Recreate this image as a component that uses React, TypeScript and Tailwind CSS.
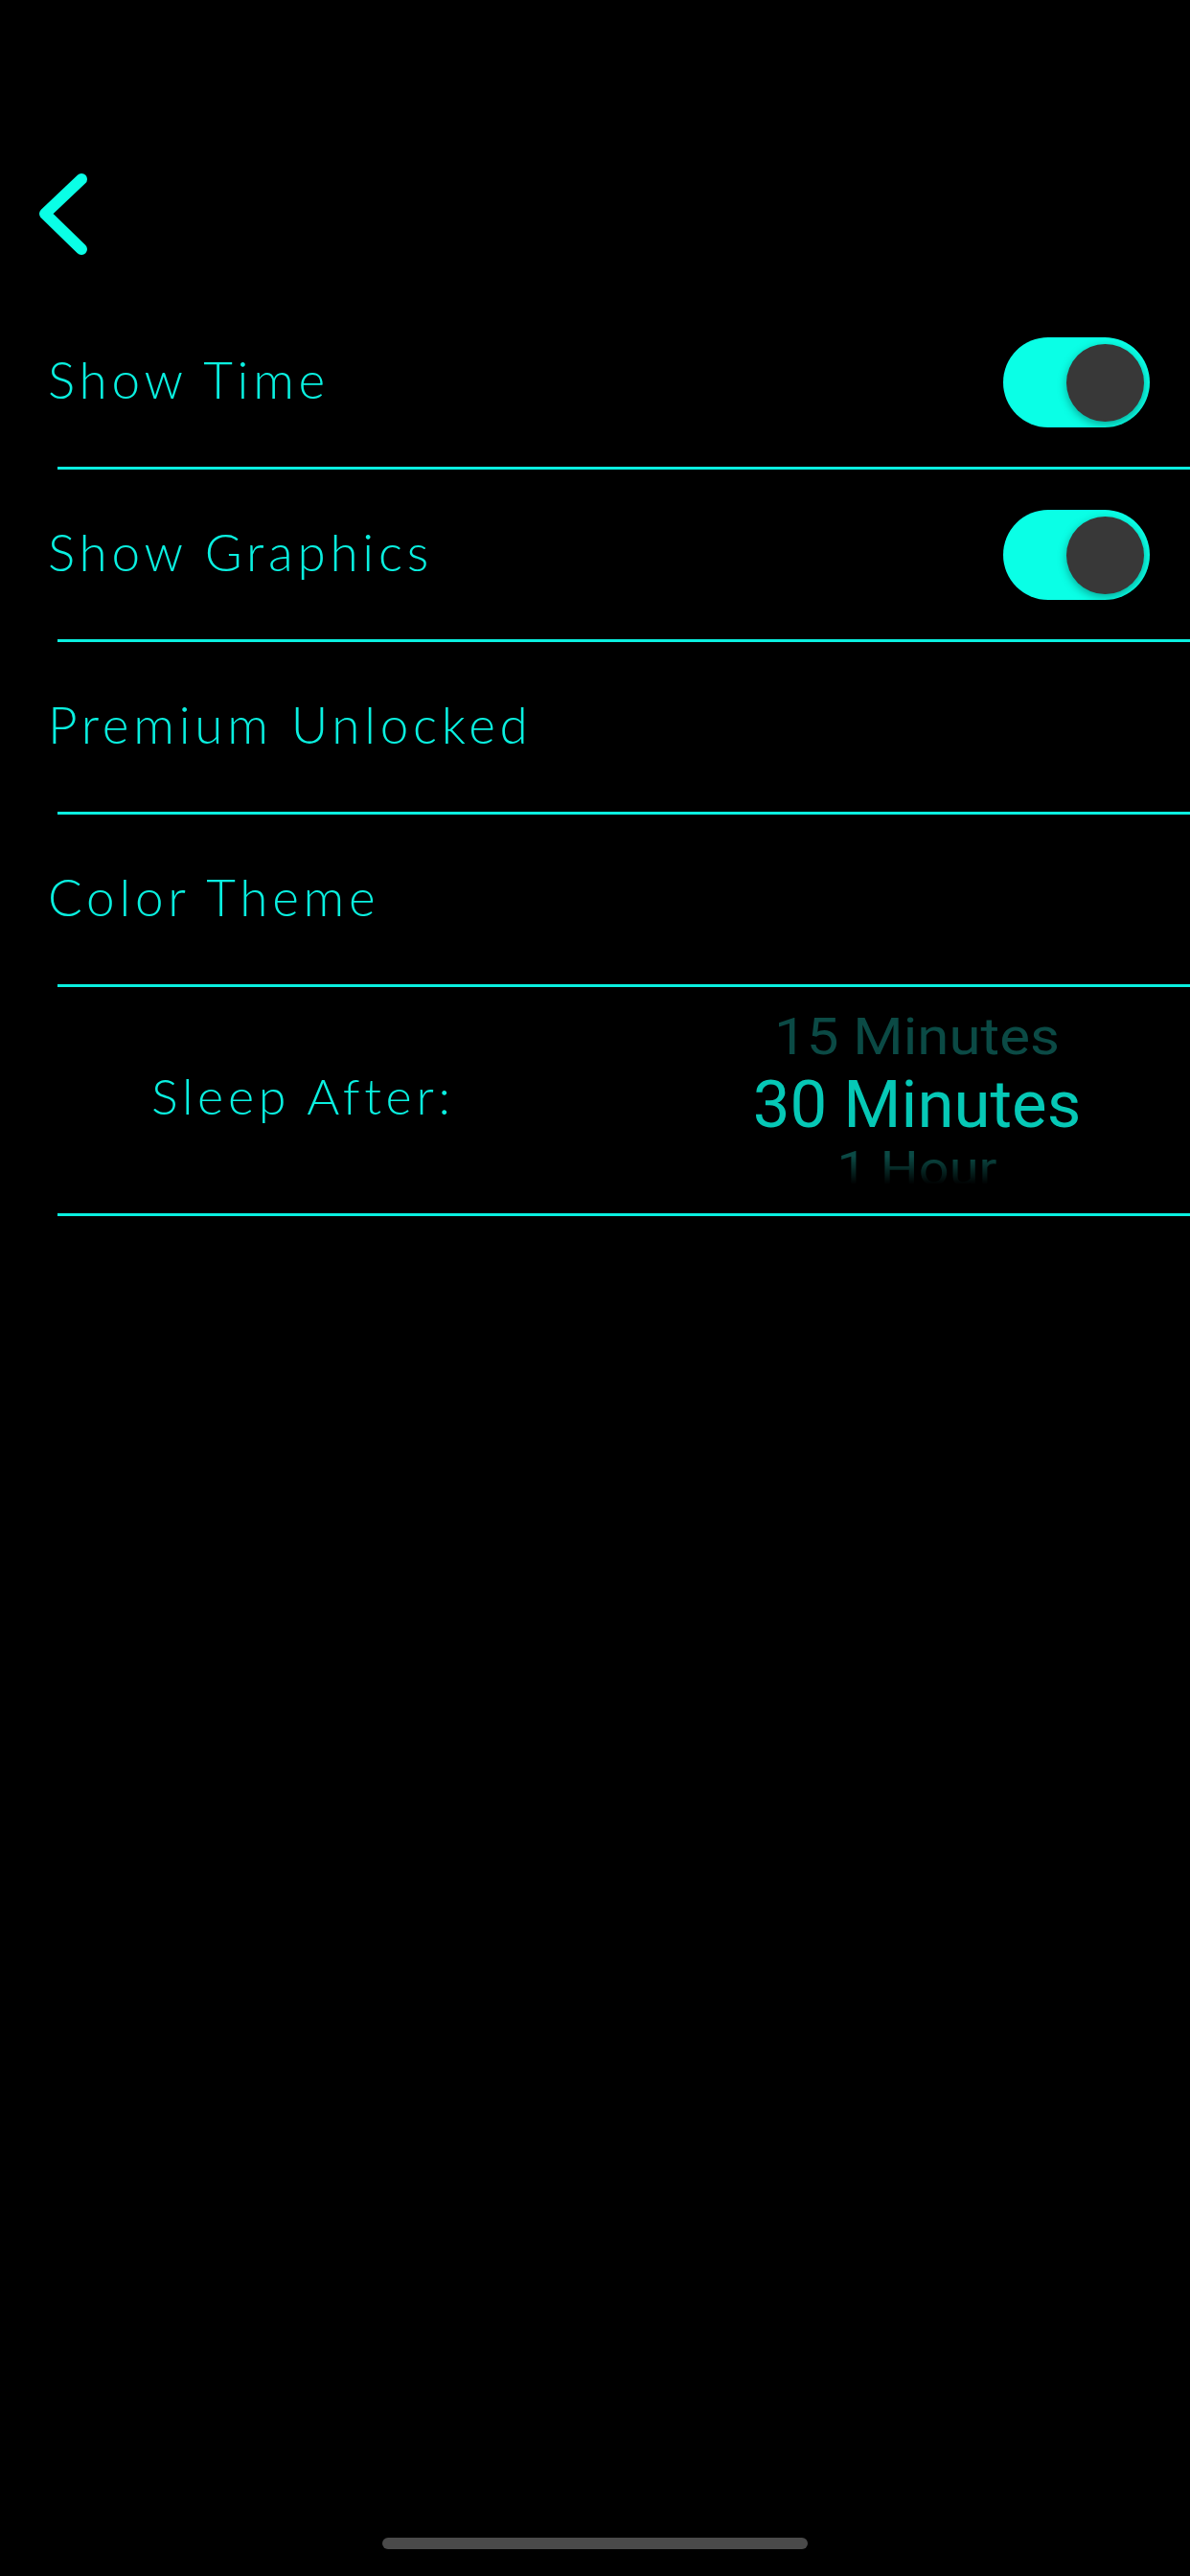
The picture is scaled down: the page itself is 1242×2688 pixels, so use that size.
import { useState } from "react";

const labelFont = { fontFamily: "Lato, 'Open Sans', sans-serif" };

const Toggle = ({ on, onChange }: { on: boolean; onChange: () => void }) => (
  <button
    onClick={onChange}
    className={`relative w-[153px] h-[94px] rounded-full ${on ? "bg-[#0affe6]" : "bg-[#2a2a2a]"}`}
  >
    <span
      className={`absolute top-[7px] w-[81px] h-[81px] rounded-full bg-[#383838] shadow-[0_3px_10px_rgba(0,0,0,0.35)] ${on ? "right-[6px]" : "left-[6px]"}`}
    />
  </button>
);

const Separator = () => <div className="ml-[60px] h-[3px] bg-[#0af0e0]" />;

const Row = ({ label, children }: { label: string; children?: React.ReactNode }) => (
  <>
    <div className="h-[177px] flex items-center justify-between pl-[50px] pr-[42px]">
      <span
        className="text-[#0af0e0] text-[53px] font-light tracking-[0.09em] -translate-y-[3px]"
        style={labelFont}
      >
        {label}
      </span>
      {children}
    </div>
    <Separator />
  </>
);

export default function App() {
  const [showTime, setShowTime] = useState(true);
  const [showGraphics, setShowGraphics] = useState(true);

  return (
    <div className="min-h-[2688px] bg-black flex flex-col">
      <div className="h-[310px] pt-[180px] pl-[40px]">
        <svg width="56" height="90" viewBox="0 0 56 90" fill="none">
          <path
            d="M45 7 L7 43 L45 80"
            stroke="#0affe6"
            strokeWidth="12"
            strokeLinecap="round"
            strokeLinejoin="round"
          />
        </svg>
      </div>

      <Row label="Show Time">
        <Toggle on={showTime} onChange={() => setShowTime(!showTime)} />
      </Row>
      <Row label="Show Graphics">
        <Toggle on={showGraphics} onChange={() => setShowGraphics(!showGraphics)} />
      </Row>
      <Row label="Premium Unlocked" />
      <Row label="Color Theme" />

      <div className="h-[236px] flex items-center pl-[158px]">
        <span
          className="text-[#0af0e0] text-[52px] font-light tracking-[0.09em] -translate-y-[5px]"
          style={labelFont}
        >
          Sleep After:
        </span>
        {/* wheel picker */}
        <div
          className="ml-auto mr-[85px] w-[400px] h-[180px] overflow-hidden flex flex-col items-center"
          style={{ fontFamily: "Roboto, 'Liberation Sans', sans-serif" }}
        >
          <div className="h-[50px] flex items-end overflow-hidden">
            <span className="text-[60px] leading-[60px] text-[#0b4a45] scale-y-[0.9] translate-y-[4px]">
              15 Minutes
            </span>
          </div>
          <div className="h-[88px] flex items-center">
            <span className="text-[69px] leading-none text-[#06c8b6]">30 Minutes</span>
          </div>
          <div className="h-[42px] overflow-hidden [mask-image:linear-gradient(to_bottom,black_25%,transparent_95%)]">
            <span className="block text-[56px] leading-[58px] text-[#0b4a45] scale-y-[0.88] -translate-y-[5px]">
              1 Hour
            </span>
          </div>
        </div>
      </div>
      <Separator />

      <div className="mt-auto mb-[28px] flex justify-center">
        <div className="w-[444px] h-[12px] rounded-full bg-[#4a4a4a]" />
      </div>
    </div>
  );
}
